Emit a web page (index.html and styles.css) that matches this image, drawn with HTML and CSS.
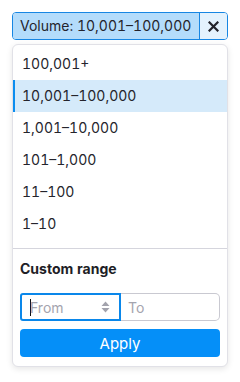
FILE: index.html
```html
<!DOCTYPE html>
<html>
<head>
<meta charset="utf-8">
<link rel="stylesheet" href="styles.css">
</head>
<body>
<div class="wrap">
  <div class="pill">
    <span class="pill-label">Volume: 10,001–100,000</span>
    <button class="pill-x" aria-label="Remove">
      <svg width="11" height="11" viewBox="0 0 11 11"><path d="M1.5 1.5L9.5 9.5M9.5 1.5L1.5 9.5" stroke="#23232b" stroke-width="2.2" stroke-linecap="square"/></svg>
    </button>
  </div>
  <div class="panel">
    <ul class="list">
      <li class="item">100,001+</li>
      <li class="item selected">10,001–100,000</li>
      <li class="item">1,001–10,000</li>
      <li class="item">101–1,000</li>
      <li class="item">11–100</li>
      <li class="item">1–10</li>
    </ul>
    <div class="custom">
      <div class="custom-title">Custom range</div>
      <div class="inputs">
        <div class="field from">
          <span class="caret"></span>
          <span class="ph">From</span>
          <svg class="spin" width="9" height="12" viewBox="0 0 9 12"><path d="M4.5 0.5L8.5 5H0.5Z M4.5 11.5L8.5 7H0.5Z" fill="#a3a3ad"/></svg>
        </div>
        <div class="field to"><span class="ph">To</span></div>
      </div>
      <button class="apply">Apply</button>
    </div>
  </div>
</div>
</body>
</html>
```
FILE: styles.css
```css
* { box-sizing: border-box; }
html, body { margin: 0; padding: 0; background: #fff; }
body {
  font-family: Inter, "Noto Sans", sans-serif;
  color: #24242c;
  font-size: 14px;
  font-variant-numeric: tabular-nums;
}
.wrap { padding: 12px; width: 240px; }
.pill {
  display: flex;
  height: 28px;
  width: 216px;
  border: 1px solid #1786e3;
  border-radius: 4px;
  overflow: hidden;
}
.pill-label {
  flex: 1;
  background: #b4dcfb;
  border-right: 1px solid #1786e3;
  padding: 0 7px;
  line-height: 26px;
  font-size: 14px;
  white-space: nowrap;
}
.pill-x {
  width: 27px;
  border: 0;
  padding: 0;
  margin: 0;
  background: #e4f2fd;
  display: flex;
  align-items: center;
  justify-content: center;
}
.panel {
  margin-top: 4px;
  width: 216px;
  border: 1px solid #e1e1e7;
  border-radius: 6px;
  box-shadow: 0 2px 6px rgba(0,0,0,0.10);
  background: #fff;
}
.list {
  list-style: none;
  margin: 0;
  padding: 3px 0 8px;
  border-bottom: 1px solid #d5d5dd;
}
.item {
  height: 32px;
  line-height: 32px;
  padding-left: 9px;
  font-size: 14px;
}
.item.selected {
  background: #d5eafa;
  box-shadow: inset 2px 0 0 #0b8def;
}
.custom { padding: 10px 7px 9px; }
.custom-title {
  font-weight: 700;
  line-height: 20px;
  font-size: 14px;
  color: #1e1e26;
}
.inputs {
  display: flex;
  margin-top: 14px;
  height: 28px;
}
.field {
  height: 28px;
  display: flex;
  align-items: center;
  font-size: 14px;
}
.from {
  width: 101px;
  border: 2px solid #0a87ea;
  border-radius: 3px 0 0 3px;
  padding-left: 8px;
  padding-right: 9px;
  position: relative;
}
.caret {
  width: 1px;
  height: 17px;
  background: #111;
  margin-right: -1px;
}
.to {
  flex: 1;
  border: 1px solid #c9c9d1;
  border-left: 0;
  border-radius: 0 5px 5px 0;
  padding-left: 7px;
}
.ph { color: #a4a4ae; }
.spin { margin-left: auto; }
.apply {
  display: block;
  width: 100%;
  margin-top: 8px;
  height: 28px;
  border: 0;
  border-radius: 4px;
  background: #058ff8;
  color: #fff;
  font-family: Inter, "Noto Sans", sans-serif;
  font-size: 15px;
  padding: 0;
}
```
